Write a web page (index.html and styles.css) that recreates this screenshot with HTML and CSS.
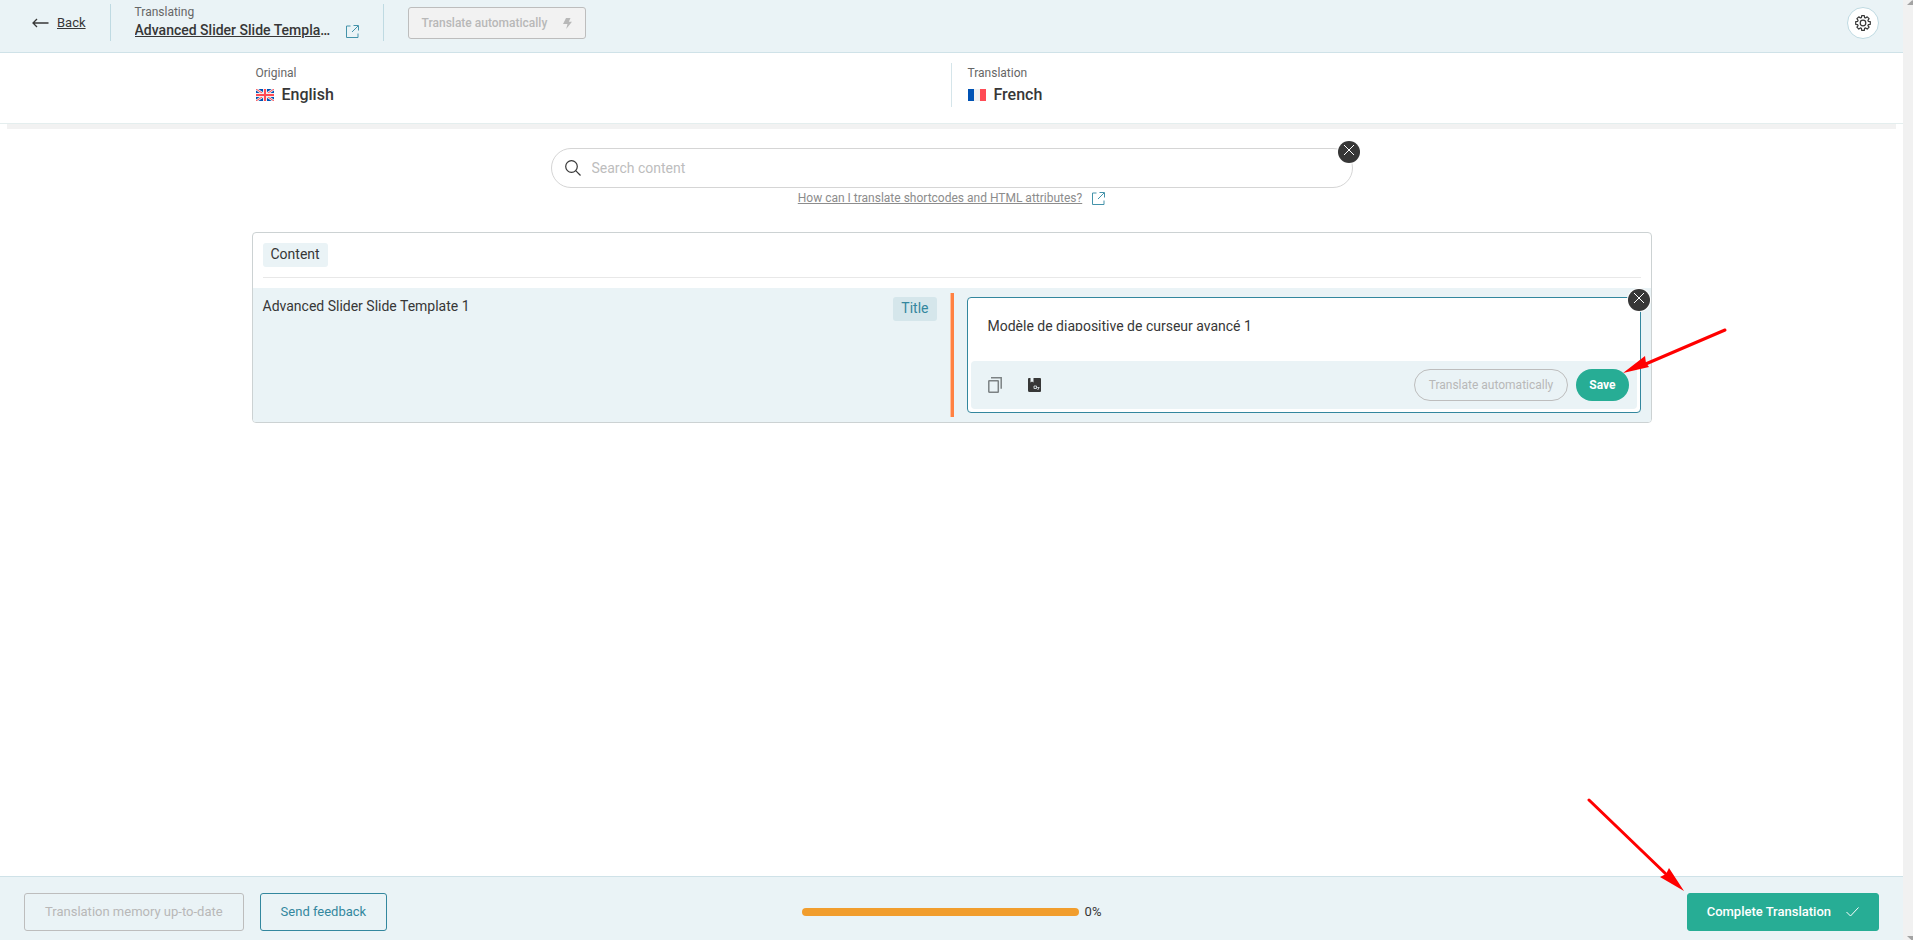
FILE: index.html
```html
<!DOCTYPE html>
<html lang="en">
<head>
<meta charset="utf-8">
<title>Translation Editor</title>
<link rel="stylesheet" href="styles.css">
</head>
<body>
<svg class="sprite" width="0" height="0" aria-hidden="true">
  <symbol id="external" viewBox="0 0 13 13"><path d="M4.500 1H.5v11.500h11.500V8.500M7.500.5h5v5M12 1 6 7" fill="none" stroke="currentColor"/></symbol>
  <symbol id="cross" viewBox="0 0 22 22"><path d="m6 4 10 10M16 4 6 14" fill="none" stroke="#fff"/></symbol>
</svg>
<div class="app">
  <header class="topbar">
    <a class="back" href="#"><svg width="17" height="10" viewBox="0 0 17 10"><path d="M16.500 5H1M5 1 1 5l4 4" fill="none" stroke="currentColor" stroke-width="1.300"/></svg><span>Back</span></a>
    <div class="job">
      <div class="job-name">
        <span class="caption">Translating</span>
        <a class="job-title" href="#">Advanced Slider Slide Template 1</a>
      </div>
      <a class="external" href="#" aria-label="Open page"><svg width="13" height="13"><use href="#external"/></svg></a>
    </div>
    <button class="auto-top" disabled>Translate automatically
      <svg width="9" height="11" viewBox="0 0 9 11"><path d="M3 0h4.500L5.800 3.700H9L3.200 11l1.300-5H0z" fill="currentColor"/></svg>
    </button>
    <button class="settings" aria-label="Settings">
      <svg width="16" height="16" viewBox="0 0 16 16" fill="none" stroke="currentColor" stroke-width="1.200" stroke-linejoin="round"><circle cx="8" cy="8" r="2.800"/><path d="M6.700.7h2.600l.3 1.900 1 .4 1.600-1.200 1.900 1.900-1.200 1.600.4 1 2 .4v2.600l-2 .3-.4 1 1.200 1.600-1.900 1.900-1.600-1.200-1 .4-.3 2H6.700l-.3-2-1-.4-1.600 1.200-1.900-1.900 1.200-1.600-.4-1-2-.3V6.700l2-.4.4-1-1.200-1.600 1.900-1.900L5.400 3l1-.4z"/></svg>
    </button>
  </header>

  <section class="languages">
    <div class="columns">
      <div class="language">
        <span class="caption">Original</span>
        <div class="language-name">
          <svg width="18" height="12" viewBox="0 0 18 12"><path fill="#0052b4" d="M0 0h18v12H0z"/><path d="m0 0 18 12M18 0 0 12" stroke="#f0f0f0" stroke-width="2.600"/><path d="m0 0 18 12M18 0 0 12" stroke="#ff4b55" stroke-width="1"/><path d="M9 0v12M0 6h18" stroke="#f0f0f0" stroke-width="4"/><path d="M9 0v12M0 6h18" stroke="#ff4b55" stroke-width="2"/></svg>
          <span>English</span>
        </div>
      </div>
      <div class="language target">
        <span class="caption">Translation</span>
        <div class="language-name">
          <svg width="18" height="12" viewBox="0 0 18 12"><path fill="#0052b4" d="M0 0h6v12H0z"/><path fill="#f0f0f0" d="M6 0h6v12H6z"/><path fill="#ff4b55" d="M12 0h6v12h-6z"/></svg>
          <span>French</span>
        </div>
      </div>
    </div>
  </section>

  <main class="content">
    <form class="search">
      <label class="search-box">
        <svg width="16" height="16" viewBox="0 0 16 16" fill="none" stroke="#373737" stroke-width="1.200"><circle cx="6.500" cy="6.500" r="5.800"/><path d="m10.700 10.700 4.800 4.800"/></svg>
        <input type="text" placeholder="Search content" aria-label="Search content">
      </label>
      <button type="button" class="close search-close" aria-label="Clear search"><svg width="22" height="22"><use href="#cross"/></svg></button>
    </form>
    <p class="help"><a href="#">How can I translate shortcodes and HTML attributes?</a><svg width="13" height="13"><use href="#external"/></svg></p>

    <section class="card">
      <div class="card-head"><h2 class="tag">Content</h2></div>
      <div class="row">
        <div class="source">
          <span>Advanced Slider Slide Template 1</span>
          <span class="tag field">Title</span>
        </div>
        <div class="target-cell">
          <div class="editor">
            <textarea aria-label="French translation" spellcheck="false">Modèle de diapositive de curseur avancé 1</textarea>
            <div class="toolbar">
              <button class="icon" aria-label="Copy original"><svg width="14" height="16" viewBox="0 0 14 16" fill="none" stroke="#7c8284" stroke-width="1.500"><rect x=".8" y="3.800" width="9.500" height="11.400" rx=".5"/><path d="M3 .8h10.200v11"/></svg></button>
              <button class="icon" aria-label="Translation memory"><svg width="13" height="14" viewBox="0 0 13 14"><path fill="#373737" d="M1 0h1.500v4.500L4 3.400l1.500 1.100V0H12q1 0 1 1v12q0 1-1 1H1.500Q0 14 0 12.500V1q0-1 1-1z"/><path d="M6 8h2.500v2.500H6zM9.200 9.500h2L9.700 12" fill="none" stroke="#eaf3f6" stroke-width=".8"/></svg></button>
              <button class="pill auto" disabled>Translate automatically</button>
              <button class="pill save">Save</button>
            </div>
            <button class="close editor-close" aria-label="Close editor"><svg width="22" height="22"><use href="#cross"/></svg></button>
          </div>
        </div>
      </div>
    </section>
  </main>

  <footer class="bottombar">
    <div class="actions">
      <button class="action" disabled>Translation memory up-to-date</button>
      <button class="action feedback">Send feedback</button>
    </div>
    <div class="progress"><div class="bar"></div><span>0%</span></div>
    <button class="action complete">Complete Translation
      <svg width="13" height="10" viewBox="0 0 13 10"><path d="m.5 5 4 4L12.500.5" fill="none" stroke="currentColor"/></svg>
    </button>
  </footer>
</div>
<div class="scrollbar" aria-hidden="true">
  <svg width="10" height="6" viewBox="0 0 10 6"><path d="M4 5 9.500 0 15 5z" fill="#a3a3a3"/></svg>
  <svg width="10" height="6" viewBox="0 0 10 6"><path d="M4 2h11L9.500 7z" fill="#a3a3a3"/></svg>
</div>
<svg class="arrow arrow-save" width="106" height="46" viewBox="0 0 106 46"><path d="M102 2 18 38" stroke="red" stroke-width="3" stroke-linecap="round"/><path d="m0 45 22-17 1 7 3 4z" fill="red"/></svg>
<svg class="arrow arrow-complete" width="98" height="94" viewBox="0 0 98 94"><path d="m2 2 78 75" stroke="red" stroke-width="3" stroke-linecap="round"/><path d="M97 93 73 79l6-3 3-6z" fill="red"/></svg>
</body>
</html>
```
FILE: styles.css
```css
* { box-sizing: border-box; }

body {
  margin: 0;
  display: flex;
  min-height: 100vh;
  font: 14px/20px Roboto, "Liberation Sans", sans-serif;
  color: #373737;
  background: #fff;
}

a { color: inherit; }
svg { display: block; flex: none; }
button, input, textarea { font: inherit; color: inherit; margin: 0; }
button { background: none; border: 0; padding: 0; }
.sprite { position: absolute; }

.app { flex: 1; display: flex; flex-direction: column; min-width: 0; }

.caption { font-size: 12px; line-height: 16px; color: #666; }

/* Top bar */
.topbar {
  display: flex;
  align-items: flex-start;
  height: 53px;
  padding: 4px 24px 10px 32px;
  background: #eaf3f6;
  border-bottom: 1px solid #cfe2e8;
}
.back { display: flex; align-items: center; gap: 8px; height: 37px; font-size: 13px; text-decoration: none; }
.back span { text-decoration: underline; }
.job {
  display: flex;
  align-items: flex-end;
  gap: 14px;
  height: 37px;
  margin-left: 24px;
  padding: 0 24px;
  border: solid #bfdae2;
  border-width: 0 1px;
}
.job-name { display: flex; flex-direction: column; height: 37px; width: 197px; }
.job-title {
  font-weight: 500;
  overflow: hidden;
  white-space: nowrap;
  text-overflow: ellipsis;
}
.external { padding-bottom: 3px; }
.external, .help svg { color: #4493aa; }
.auto-top {
  display: flex;
  align-items: center;
  gap: 16px;
  height: 32px;
  margin: 3px 0 0 24px;
  padding: 0 13px;
  border: 1px solid #bdbdbd;
  border-radius: 3px;
  background: #f2f2f2;
  color: #b8b8b8;
  font-size: 12px;
  font-weight: 500;
}
.settings {
  display: grid;
  place-items: center;
  width: 32px;
  height: 32px;
  margin: 3px 0 0 auto;
  border: 1px solid #bfdae2;
  border-radius: 50%;
  background: #fff;
}

/* Languages */
.languages {
  padding: 10px 24px 16px;
  border-bottom: 1px solid #e4eeee;
  box-shadow: 0 12px 0 -7px #f2f2f2;
}
.columns { display: grid; grid-template-columns: 1fr 1fr; max-width: 1400px; margin: 0 auto; }
.language { height: 44px; padding-left: 4px; }
.language .caption { display: block; margin-top: 2px; }
.target { margin-left: -1px; border-left: 1px solid #d5e5ea; padding-left: 16px; }
.language-name { display: flex; align-items: center; gap: 8px; margin-top: 4px; font-size: 16px; font-weight: 500; }

/* Content */
.content { flex: 1; padding: 24px; }
.search { position: relative; max-width: 802px; margin: 0 auto; }
.search-box {
  display: flex;
  align-items: center;
  gap: 11px;
  height: 40px;
  padding: 0 13px;
  border: 1px solid #d5d5d5;
  border-radius: 20px;
}
.search-box input { flex: 1; min-width: 0; border: 0; padding: 0; outline: 0; background: none; }
.search-box input::placeholder { color: #bdbdbd; opacity: 1; }
.close { position: absolute; border-radius: 50%; background: #373737; box-shadow: 0 0 0 1px #fff; }
.search-close { top: -7px; right: -7px; }
.help {
  display: flex;
  justify-content: center;
  align-items: center;
  gap: 10px;
  margin: 2px 0 0;
  font-size: 12px;
  line-height: 16px;
  color: #8c8c8c;
}

/* Card */
.card {
  max-width: 1400px;
  margin: 26px auto 0;
  border: 1px solid #ccd2d3;
  border-radius: 4px;
}
.card-head { margin: 0 10px 10px; padding: 10px 0; border-bottom: 1px solid #e8e8e8; }
.tag {
  display: inline-block;
  height: 24px;
  margin: 0;
  padding: 0 8px;
  border-radius: 3px;
  background: #eaf3f6;
  font-size: 14px;
  font-weight: 400;
  line-height: 23px;
  vertical-align: top;
}
.row { display: grid; grid-template-columns: 1fr 1fr; padding: 5px 0; background: #eaf3f6; border-radius: 0 0 3px 3px; }
.source { display: flex; justify-content: space-between; align-items: flex-start; padding: 4px 15px 0 10px; line-height: 18px; }
.field { background: #d5e6eb; color: #33879e; }
.target-cell {
  margin-left: -1px;
  padding: 4px 10px 4px 13px;
  border-left: 3px solid #ff8142;
  box-shadow: -1px 0 #ffc09f;
}
.editor {
  position: relative;
  padding: 18px 3px 3px;
  border: 1px solid #33879e;
  border-radius: 4px;
  background: #fff;
}
.editor textarea {
  display: block;
  width: 100%;
  height: 15px;
  margin-bottom: 30px;
  padding: 0 17px;
  border: 0;
  outline: 0;
  resize: none;
  overflow: hidden;
}
.toolbar { display: flex; align-items: center; height: 48px; padding: 0 8px 0 17px; border-radius: 4px; background: #eaf3f6; }
.icon { margin-right: 26px; }
.pill { height: 32px; padding: 0 14px; border-radius: 16px; font-size: 12px; }
.auto { margin-left: auto; border: 1px solid #bdbdbd; color: #b8b8b8; }
.save { margin-left: 8px; padding: 0 13px; background: #27ad95; color: #fff; font-weight: 700; }
.editor-close { top: -9px; right: -10px; }

/* Bottom bar */
.bottombar {
  display: grid;
  grid-template-columns: 1fr auto 1fr;
  align-items: center;
  padding: 16px 24px 9px;
  border-top: 1px solid #cfe2e8;
  background: #eaf3f6;
}
.actions { display: flex; gap: 16px; }
.action {
  display: flex;
  align-items: center;
  height: 38px;
  padding: 0 20px;
  border: 1px solid #bdbdbd;
  border-radius: 3px;
  color: #b8b8b8;
  font-size: 13px;
}
.feedback { border-color: #33879e; color: #33879e; }
.complete { justify-self: end; gap: 15px; padding: 0 19px; border-color: #27ad95; background: #27ad95; color: #fff; font-weight: 500; }
.progress { display: flex; align-items: center; gap: 6px; font-size: 13px; }
.bar { width: 277px; height: 8px; border-radius: 4px; background: #f19d2d; }

.scrollbar { display: flex; flex-direction: column; justify-content: space-between; width: 10px; background: #f1f1f1; }

/* Annotation arrows */
.arrow { position: absolute; }
.arrow-save { left: 1623px; top: 328px; }
.arrow-complete { left: 1587px; top: 798px; }
```
